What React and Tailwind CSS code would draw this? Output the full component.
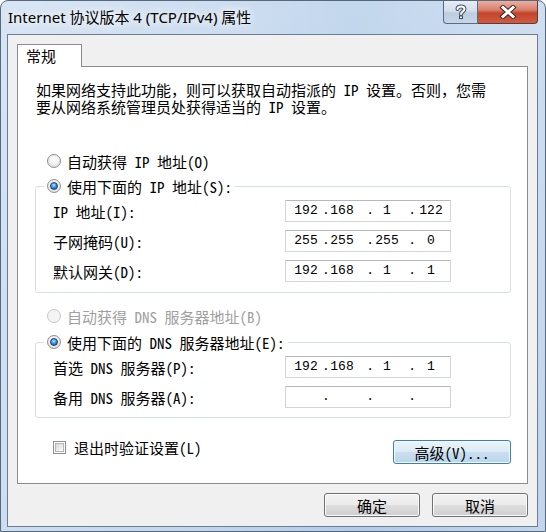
import React, { Fragment } from "react";

const CJK = "font-['Noto_Sans_Mono_CJK_SC','Noto_Sans_CJK_SC',monospace]";

function Radio({ checked, disabled }) {
  return (
    <span
      className={
        disabled
          ? "flex h-[14px] w-[14px] shrink-0 items-center justify-center rounded-full border border-[#c6c6c6] bg-[#f4f4f4]"
          : "flex h-[14px] w-[14px] shrink-0 items-center justify-center rounded-full border border-[#8e8f8f] bg-[radial-gradient(circle_at_50%_40%,#ffffff_0%,#f1f1f1_45%,#cfcfcf_100%)]"
      }
    >
      {checked && (
        <span className="h-[8px] w-[8px] rounded-full border border-[#1c3f66] bg-[radial-gradient(circle_at_45%_35%,#bfe6ff_0%,#3d95e6_45%,#14467f_100%)]" />
      )}
    </span>
  );
}

function IPBox({ parts }) {
  const p = parts || ["", "", "", ""];
  return (
    <div className="flex h-[22px] w-[166px] items-center border border-[#d2d6db] border-t-[#b5b9bf] bg-white pl-[4px] font-['Liberation_Mono',monospace] text-[13px] leading-[20px] text-black">
      <span className="w-[32px] text-center">{p[0]}</span>
      <span className="w-[6px] text-right">.</span>
      <span className="w-[28px] text-center">{p[1]}</span>
      <span className="w-[18px] text-right">.</span>
      <span className="w-[26px] text-center">{p[2]}</span>
      <span className="w-[16px] text-right">.</span>
      <span className="w-[30px] text-center">{p[3]}</span>
    </div>
  );
}

function Btn({ children, primary, className }) {
  return (
    <div
      className={
        (primary
          ? "border-[#3c7fb1] bg-[linear-gradient(180deg,#eaf4fb_0%,#dceaf5_48%,#c9def0_52%,#bcd5ea_100%)] shadow-[inset_0_0_0_1px_#f2f9fe] "
          : "border-[#707070] bg-[linear-gradient(180deg,#f2f2f2_0%,#ebebeb_48%,#dddddd_52%,#cfcfcf_100%)] shadow-[inset_0_0_0_1px_#fbfbfb] ") +
        "flex h-[24px] items-center justify-center rounded-[3px] border text-[15px] leading-[17px] text-black " +
        (className || "")
      }
    >
      {children}
    </div>
  );
}

function Row({ label, parts }) {
  return (
    <>
      <div className="text-[15px] leading-[17px]">{label}</div>
      <IPBox parts={parts} />
    </>
  );
}

export default function App() {
  return (
    <div className={"h-[532px] w-[546px] bg-white text-black " + CJK}>
      <div className="flex h-[532px] w-[546px] flex-col rounded-t-[8px] border border-[#55687e] bg-[linear-gradient(90deg,rgba(255,255,255,0.35)_0%,rgba(255,255,255,0.15)_45%,rgba(255,255,255,0)_65%,rgba(255,255,255,0.2)_100%),linear-gradient(180deg,#c3d7ed_0%,#b9d0ea_50%,#b3cbe7_100%)]">
        {/* title bar */}
        <div className="flex h-[33px] shrink-0 items-start justify-between">
          <div className="flex h-[33px] items-center pl-[7px] font-['Noto_Sans','Noto_Sans_CJK_SC',sans-serif] text-[15px] text-black [text-shadow:0_0_8px_#ffffff,0_0_12px_#ffffff]">
            Internet 协议版本 4 (TCP/IPv4) 属性
          </div>
          <div className="mr-[7px] flex h-[23px]">
            <div className="flex h-[23px] w-[35px] items-center justify-center rounded-bl-[4px] border border-t-0 border-[#5b6c80] bg-[linear-gradient(180deg,#e6eef6_0%,#d3dfec_45%,#bccde0_55%,#c6d6e8_100%)]">
              <svg width="12" height="16" viewBox="0 0 12 16">
                <path d="M2.5 5 C2.5 1.5 9.5 1.5 9.5 5 C9.5 7.5 6 7.5 6 10" fill="none" stroke="#3d4a57" strokeWidth="4" strokeLinecap="round" />
                <path d="M2.5 5 C2.5 1.5 9.5 1.5 9.5 5 C9.5 7.5 6 7.5 6 10" fill="none" stroke="#ffffff" strokeWidth="2" strokeLinecap="round" />
                <rect x="4" y="11.5" width="4" height="3.5" rx="0.5" fill="#3d4a57" />
                <rect x="5" y="12.5" width="2" height="1.5" fill="#ffffff" />
              </svg>
            </div>
            <div className="flex h-[23px] w-[60px] items-center justify-center rounded-br-[4px] border border-l-0 border-t-0 border-[#5e3b35] bg-[linear-gradient(180deg,#eab0a3_0%,#d9806d_40%,#c4452b_55%,#d05b42_100%)]">
              <svg width="18" height="14" viewBox="0 0 18 14">
                <path d="M4 2.5 L14 11.5 M14 2.5 L4 11.5" stroke="#3b2a27" strokeWidth="5" strokeLinecap="square" />
                <path d="M4 2.5 L14 11.5 M14 2.5 L4 11.5" stroke="#ffffff" strokeWidth="3" strokeLinecap="square" />
              </svg>
            </div>
          </div>
        </div>

        {/* client */}
        <div className="ml-[6px] mr-[7px] flex h-[493px] flex-col border border-[#6a7d92] bg-[#f0f0f0] px-[9px] pt-[9px]">
          <div className="relative z-10 -mb-px flex h-[23px] w-[65px] items-start border border-b-0 border-[#898c95] bg-white pl-[8px] pt-[2px] text-[15px] leading-[17px]">
            常规
          </div>
          <div className="flex flex-col border border-[#898c95] bg-white pb-[19px]">
            <div className="ml-[18px] mt-[14px] whitespace-nowrap text-[15px] leading-[17px]">
              <div>如果网络支持此功能，则可以获取自动指派的 IP 设置。否则，您需</div>
              <div>要从网络系统管理员处获得适当的 IP 设置。</div>
            </div>

            <div className="ml-[29px] mt-[38px] flex h-[16px] items-center gap-[6px] text-[15px] leading-[17px]">
              <Radio />
              <span>自动获得 IP 地址(O)</span>
            </div>

            <fieldset className="ml-[17px] mt-[9px] w-[476px] rounded-[3px] border border-[#d5dfe5] p-0">
              <legend className="ml-[8px] px-[3px]">
                <div className="flex h-[16px] items-center gap-[6px] text-[15px] leading-[17px]">
                  <Radio checked />
                  <span>使用下面的 IP 地址(S):</span>
                </div>
              </legend>
              <div className="grid grid-cols-[232px_166px] items-center gap-y-[8px] pb-[10px] pl-[17px] pt-[6px]">
                <Row label="IP 地址(I):" parts={["192", "168", "1", "122"]} />
                <Row label="子网掩码(U):" parts={["255", "255", "255", "0"]} />
                <Row label="默认网关(D):" parts={["192", "168", "1", "1"]} />
              </div>
            </fieldset>

            <div className="ml-[29px] mt-[15px] flex h-[16px] items-center gap-[6px] text-[15px] leading-[17px] text-[#a0a0a0]">
              <Radio disabled />
              <span>自动获得 DNS 服务器地址(B)</span>
            </div>

            <fieldset className="ml-[17px] mt-[10px] w-[476px] rounded-[3px] border border-[#d5dfe5] p-0">
              <legend className="ml-[8px] px-[3px]">
                <div className="flex h-[16px] items-center gap-[6px] text-[15px] leading-[17px]">
                  <Radio checked />
                  <span>使用下面的 DNS 服务器地址(E):</span>
                </div>
              </legend>
              <div className="grid grid-cols-[232px_166px] items-center gap-y-[8px] pb-[9px] pl-[17px] pt-[6px]">
                <Row label="首选 DNS 服务器(P):" parts={["192", "168", "1", "1"]} />
                <Row label="备用 DNS 服务器(A):" />
              </div>
            </fieldset>

            <div className="ml-[35px] mr-[16px] mt-[22px] flex items-start justify-between">
              <div className="flex h-[14px] items-center gap-[8px] text-[15px] leading-[17px]">
                <span className="flex h-[13px] w-[13px] items-center justify-center border border-[#8f8f8f] bg-white">
                  <span className="h-[9px] w-[9px] border border-[#b5b5b5] bg-[linear-gradient(135deg,#d6d6d6_0%,#f2f2f2_70%,#ffffff_100%)]" />
                </span>
                <span>退出时验证设置(L)</span>
              </div>
              <Btn primary className="w-[118px]">高级(V)...</Btn>
            </div>
          </div>

          <div className="mr-[0px] mt-[9px] flex justify-end gap-[12px]">
            <Btn className="w-[96px]">确定</Btn>
            <Btn className="w-[96px]">取消</Btn>
          </div>
        </div>
      </div>
    </div>
  );
}
